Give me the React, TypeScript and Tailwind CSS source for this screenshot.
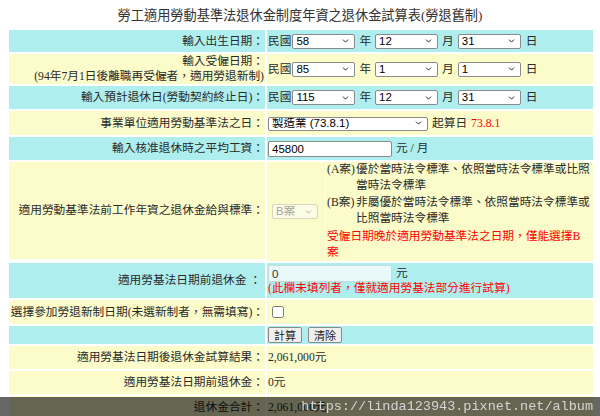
import { ChevronDown } from "lucide-react";
import type { ReactNode } from "react";

const CYAN = "bg-[#afeeee]";
const YELLOW = "bg-[#fcfccb]";

const Row = ({
  label,
  bg,
  h,
  children,
  labelClass = "",
  valueClass = "",
}: {
  label: ReactNode;
  bg: string;
  h: string;
  children?: ReactNode;
  labelClass?: string;
  valueClass?: string;
}) => (
  <>
    <div className={`${bg} ${h} flex flex-col justify-center items-end text-right pr-px ${labelClass}`}>
      {label}
    </div>
    <div className={`${bg} flex items-center pl-px ${valueClass}`}>{children}</div>
  </>
);

const Select = ({
  value,
  w,
  h = "h-[15px]",
  disabled = false,
}: {
  value: string;
  w: string;
  h?: string;
  disabled?: boolean;
}) => (
  <div className={`relative ${w} ${h} shrink-0`}>
    <select
      disabled={disabled}
      defaultValue={value}
      className={
        disabled
          ? "appearance-none w-full h-full border border-[#d8d8c0] rounded-[2px] bg-[#fbfbe6] text-[#a8a8a0] pl-[3px] text-[11.5px] leading-none font-['Liberation_Sans','Noto_Sans_CJK_TC',sans-serif]"
          : "appearance-none w-full h-full border border-[#8a8a8a] rounded-[2px] bg-white text-black pl-[3px] text-[11.5px] leading-none font-['Liberation_Sans','Noto_Sans_CJK_TC',sans-serif]"
      }
    >
      <option>{value}</option>
    </select>
    <ChevronDown
      size={9}
      strokeWidth={2.6}
      className={
        disabled
          ? "absolute right-[5px] top-1/2 -translate-y-1/2 pointer-events-none text-[#b0b0a8]"
          : "absolute right-[5px] top-1/2 -translate-y-1/2 pointer-events-none text-[#222]"
      }
    />
  </div>
);

const DateRow = ({ y, m, d }: { y: string; m: string; d: string }) => (
  <div className="flex items-center">
    <span>民國</span>
    <span className="ml-px" />
    <Select value={y} w="w-[63px]" />
    <span className="mx-[4px]">年</span>
    <Select value={m} w="w-[63px]" />
    <span className="mx-[4px]">月</span>
    <Select value={d} w="w-[63px]" />
    <span className="ml-[5px]">日</span>
  </div>
);

const Btn = ({ children }: { children: ReactNode }) => (
  <button className="h-[16px] px-[5px] border border-[#8a8a8a] rounded-[2px] bg-[#efefef] text-[11px] leading-none font-['Noto_Sans_CJK_TC',sans-serif] text-[#222]">
    {children}
  </button>
);

export default function App() {
  return (
    <div className="relative w-[600px] min-h-[416px] bg-white text-[#2a2a2a] text-[11.7px] leading-[15px] font-['Liberation_Serif','Noto_Sans_CJK_TC',serif]">
      <div className="h-[30px] pt-[6px] text-center text-[13.2px] leading-[20px] text-[#333]">
        勞工適用勞動基準法退休金制度年資之退休金試算表(勞退舊制)
      </div>

      <div className="ml-[9px] grid grid-cols-[256px_326px] gap-[2px]">
        <Row label="輸入出生日期：" bg={CYAN} h="h-[22px]">
          <DateRow y="58" m="12" d="31" />
        </Row>

        <Row
          label={
            <>
              <span>輸入受僱日期：</span>
              <span>(94年7月1日後離職再受僱者，適用勞退新制)</span>
            </>
          }
          bg={YELLOW}
          h="h-[30px]"
        >
          <DateRow y="85" m="1" d="1" />
        </Row>

        <Row label="輸入預計退休日(勞動契約終止日)：" bg={CYAN} h="h-[23px]">
          <DateRow y="115" m="12" d="31" />
        </Row>

        <Row label="事業單位適用勞動基準法之日：" bg={YELLOW} h="h-[24px]">
          <Select value="製造業 (73.8.1)" w="w-[160px]" h="h-[14px]" />
          <span className="ml-[4px]">起算日</span>
          <span className="ml-[4px] text-[#f00]">73.8.1</span>
        </Row>

        <Row label="輸入核准退休時之平均工資：" bg={CYAN} h="h-[23px]">
          <input
            defaultValue="45800"
            className="w-[124px] h-[16px] border border-[#8a8a8a] rounded-[2px] bg-white pl-[3px] text-[11.5px] leading-none font-['Liberation_Sans',sans-serif] text-black"
          />
          <span className="ml-[4px]">元 / 月</span>
        </Row>

        <Row
          label="適用勞動基準法前工作年資之退休金給與標準："
          bg={YELLOW}
          h="h-[97px]"
          valueClass="!items-stretch !pl-0"
        >
          <div className="w-[58px] flex items-center pl-[5px]">
            <Select value="B案" w="w-[46px]" h="h-[15px]" disabled />
          </div>
          <div className="w-px bg-white/70" />
          <div className="pl-px whitespace-nowrap leading-[16px]">
            <div className="flex">
              <span className="w-[29px] shrink-0">(A案)</span>
              <span>
                優於當時法令標準、依照當時法令標準或比照
                <br />
                當時法令標準
              </span>
            </div>
            <div className="flex mt-px">
              <span className="w-[29px] shrink-0">(B案)</span>
              <span>
                非屬優於當時法令標準、依照當時法令標準或
                <br />
                比照當時法令標準
              </span>
            </div>
            <div className="mt-[2px] text-[#f00]">
              受僱日期晚於適用勞動基準法之日期，僅能選擇B
              <br />案
            </div>
          </div>
        </Row>

        <Row label={"適用勞基法日期前退休金 ：\u00a0"} bg={CYAN} h="h-[35px]" valueClass="!items-start !flex-col">
          <div className="flex items-center pt-[2px]">
            <input
              defaultValue="0"
              className="w-[124px] h-[17px] border border-[#c6dcdc] rounded-[2px] bg-[#e9f8f8] pl-[3px] text-[11.5px] leading-none font-['Liberation_Sans',sans-serif] text-[#333]"
            />
            <span className="ml-[4px]">元</span>
          </div>
          <div className="text-[#f00] leading-[14px]">(此欄未填列者，僅就適用勞基法部分進行試算)</div>
        </Row>

        <Row label="選擇參加勞退新制日期(未選新制者，無需填寫)：" bg={YELLOW} h="h-[24px]">
          <input type="checkbox" className="ml-[4px] w-[12px] h-[12px]" />
        </Row>

        <Row label="" bg={CYAN} h="h-[18px]" valueClass="gap-[6px]">
          <Btn>計算</Btn>
          <Btn>清除</Btn>
        </Row>

        <Row label="適用勞基法日期後退休金試算結果：" bg={YELLOW} h="h-[23px]">
          <span>2,061,000元</span>
        </Row>

        <Row label="適用勞基法日期前退休金：" bg={YELLOW} h="h-[23px]">
          <span>0元</span>
        </Row>

        <Row label="退休金合計：" bg={YELLOW} h="h-[23px]">
          <span>2,061,000元</span>
        </Row>
      </div>

      <div className="fixed bottom-0 inset-x-0 h-[19px] bg-black/60 flex items-center justify-end pr-[7px] text-[#d4d4d4] text-[13.5px] leading-none font-['Liberation_Mono',monospace]">
        https://linda123943.pixnet.net/album
      </div>
    </div>
  );
}
